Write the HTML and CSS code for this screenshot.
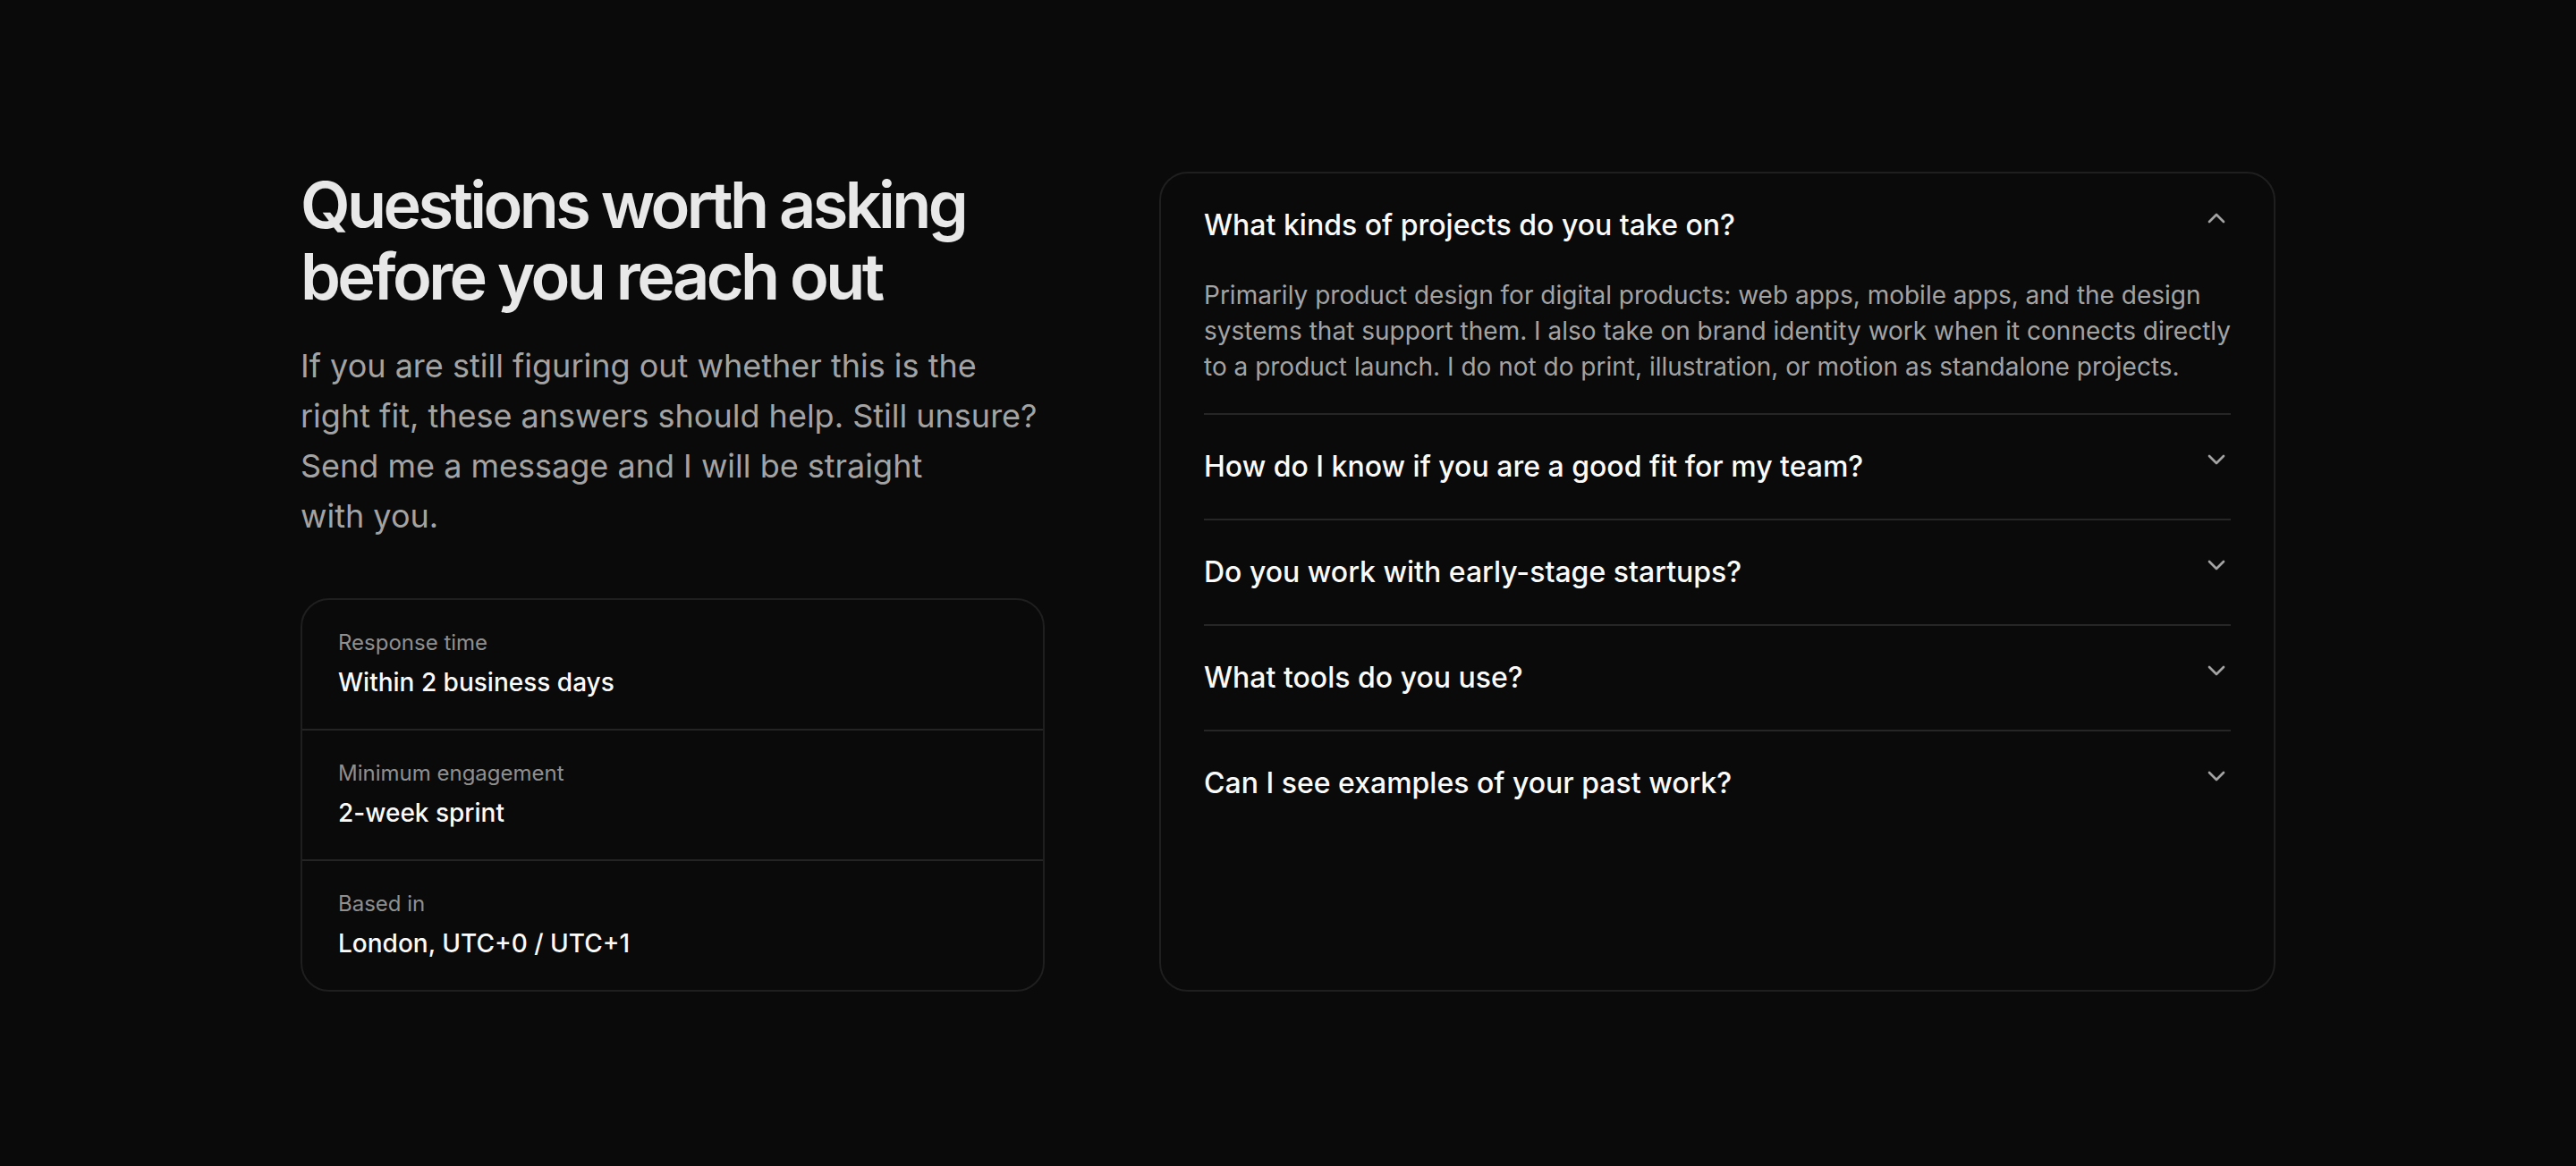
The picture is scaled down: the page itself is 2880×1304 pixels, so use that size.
FILE: index.html
```html
<!DOCTYPE html>
<html lang="en">
<head>
<meta charset="utf-8">
<title>FAQ</title>
<link rel="stylesheet" href="styles.css">
</head>
<body>
<section class="faq">
  <div class="faq-inner">
    <div class="intro">
      <h2 class="title">Questions worth asking before you reach out</h2>
      <p class="lead">If you are still figuring out whether this is the right fit, these answers should help. Still unsure? Send me a message and I will be straight with you.</p>
      <dl class="facts">
        <div class="fact">
          <dt class="fact-label">Response time</dt>
          <dd class="fact-value">Within 2 business days</dd>
        </div>
        <div class="fact">
          <dt class="fact-label">Minimum engagement</dt>
          <dd class="fact-value">2-week sprint</dd>
        </div>
        <div class="fact">
          <dt class="fact-label">Based in</dt>
          <dd class="fact-value">London, UTC+0 / UTC+1</dd>
        </div>
      </dl>
    </div>
    <div class="accordion">
      <div class="item open">
        <button class="question" type="button">
          <span class="q-text">What kinds of projects do you take on?</span>
          <svg class="chev" viewBox="0 0 24 24" width="32" height="32" fill="none" stroke="currentColor" stroke-width="2" stroke-linecap="round" stroke-linejoin="round"><polyline points="18 15 12 9 6 15"></polyline></svg>
        </button>
        <p class="answer">Primarily product design for digital products: web apps, mobile apps, and the design systems that support them. I also take on brand identity work when it connects directly to a product launch. I do not do print, illustration, or motion as standalone projects.</p>
      </div>
      <div class="item">
        <button class="question" type="button">
          <span class="q-text">How do I know if you are a good fit for my team?</span>
          <svg class="chev" viewBox="0 0 24 24" width="32" height="32" fill="none" stroke="currentColor" stroke-width="2" stroke-linecap="round" stroke-linejoin="round"><polyline points="6 9 12 15 18 9"></polyline></svg>
        </button>
      </div>
      <div class="item">
        <button class="question" type="button">
          <span class="q-text">Do you work with early-stage startups?</span>
          <svg class="chev" viewBox="0 0 24 24" width="32" height="32" fill="none" stroke="currentColor" stroke-width="2" stroke-linecap="round" stroke-linejoin="round"><polyline points="6 9 12 15 18 9"></polyline></svg>
        </button>
      </div>
      <div class="item">
        <button class="question" type="button">
          <span class="q-text">What tools do you use?</span>
          <svg class="chev" viewBox="0 0 24 24" width="32" height="32" fill="none" stroke="currentColor" stroke-width="2" stroke-linecap="round" stroke-linejoin="round"><polyline points="6 9 12 15 18 9"></polyline></svg>
        </button>
      </div>
      <div class="item">
        <button class="question" type="button">
          <span class="q-text">Can I see examples of your past work?</span>
          <svg class="chev" viewBox="0 0 24 24" width="32" height="32" fill="none" stroke="currentColor" stroke-width="2" stroke-linecap="round" stroke-linejoin="round"><polyline points="6 9 12 15 18 9"></polyline></svg>
        </button>
      </div>
    </div>
  </div>
</section>
</body>
</html>
```
FILE: styles.css
```css
* { box-sizing: border-box; }

html, body {
  margin: 0;
  padding: 0;
  background: #0a0a0a;
}

body {
  min-height: 1304px;
  font-family: Inter, "Noto Sans", "Liberation Sans", sans-serif;
  color: #fafafa;
}

.faq {
  padding: 192px 0 192px;
}

.faq-inner {
  width: 2208px;
  margin: 0 auto;
  display: grid;
  grid-template-columns: 2fr 3fr;
  column-gap: 128px;
  align-items: stretch;
}

.intro {
  display: flex;
  flex-direction: column;
}

.title {
  margin: -3px 0 0;
  font-size: 72px;
  line-height: 80px;
  font-weight: 600;
  letter-spacing: -0.05em;
  color: #e8e8e8;
}

.lead {
  margin: 32px 0 0;
  font-size: 36px;
  line-height: 56px;
  color: #a3a3a3;
  text-wrap: pretty;
}

.facts {
  margin: 64px 0 0;
  border: 2px solid #1f1f1f;
  border-radius: 32px;
}

.fact {
  padding: 32px 40px;
  border-bottom: 2px solid #242424;
}

.fact:last-child {
  border-bottom: none;
}

.fact-label {
  font-size: 24px;
  line-height: 32px;
  color: #8f8f8f;
}

.fact-value {
  margin: 8px 0 0;
  font-size: 28px;
  line-height: 40px;
  font-weight: 500;
  color: #fafafa;
}

.accordion {
  border: 2px solid #1f1f1f;
  border-radius: 32px;
  padding: 0 48px;
}

.item {
  border-bottom: 2px solid #262626;
}

.item:last-child {
  border-bottom: none;
}

.question {
  display: flex;
  align-items: flex-start;
  justify-content: space-between;
  gap: 32px;
  width: 100%;
  padding: 34px 0;
  margin: 0;
  border: none;
  background: none;
  font-family: inherit;
  text-align: left;
  cursor: pointer;
  color: #fafafa;
}

.q-text {
  font-size: 32px;
  line-height: 48px;
  font-weight: 500;
}

.chev {
  flex: none;
  color: #a3a3a3;
}

.answer {
  margin: 0;
  padding: 0 0 32px;
  font-size: 28px;
  line-height: 40px;
  color: #a3a3a3;
}
```
